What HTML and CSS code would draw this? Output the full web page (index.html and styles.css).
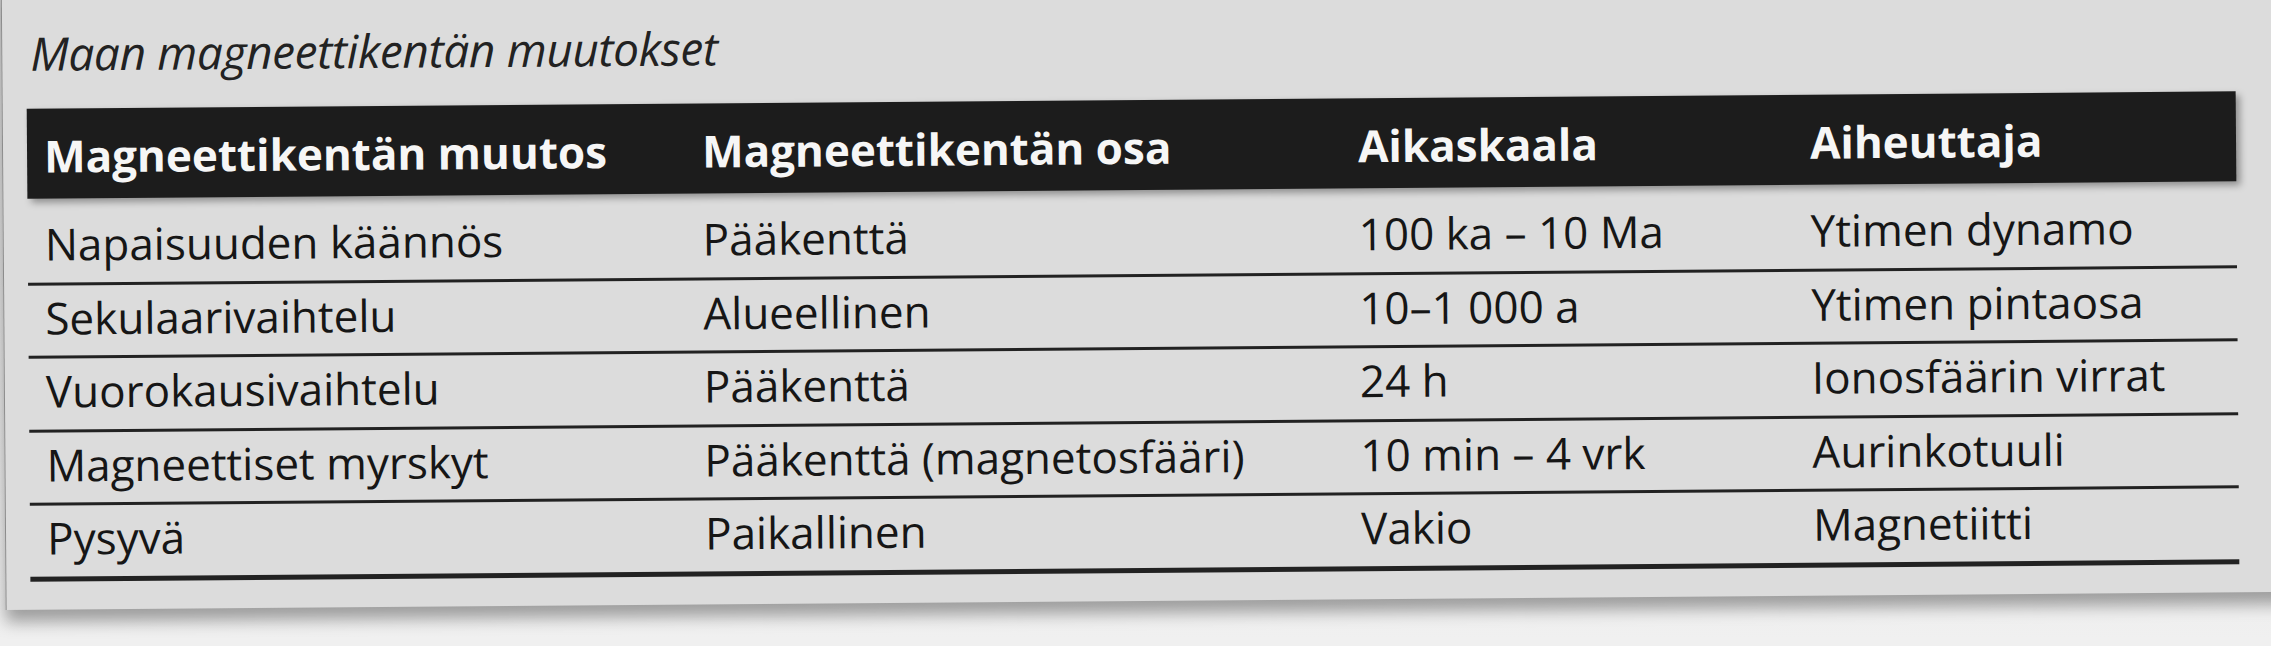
FILE: index.html
```html
<!DOCTYPE html>
<html lang="fi">
<head>
<meta charset="utf-8">
<title>Maan magneettikentän muutokset</title>
<link rel="stylesheet" href="styles.css">
</head>
<body>
<div class="scan">
  <div class="paper">
    <h1 class="title">Maan magneettikentän muutokset</h1>
    <div class="table">
      <div class="thead">
        <div class="th">Magneettikentän muutos</div>
        <div class="th">Magneettikentän osa</div>
        <div class="th">Aikaskaala</div>
        <div class="th">Aiheuttaja</div>
      </div>
      <div class="tbody">
        <div class="row">
          <div class="td">Napaisuuden käännös</div>
          <div class="td">Pääkenttä</div>
          <div class="td">100 ka – 10 Ma</div>
          <div class="td">Ytimen dynamo</div>
        </div>
        <div class="row">
          <div class="td">Sekulaarivaihtelu</div>
          <div class="td">Alueellinen</div>
          <div class="td">10–1 000 a</div>
          <div class="td">Ytimen pintaosa</div>
        </div>
        <div class="row">
          <div class="td">Vuorokausivaihtelu</div>
          <div class="td">Pääkenttä</div>
          <div class="td">24 h</div>
          <div class="td">Ionosfäärin virrat</div>
        </div>
        <div class="row">
          <div class="td">Magneettiset myrskyt</div>
          <div class="td">Pääkenttä (magnetosfääri)</div>
          <div class="td">10 min – 4 vrk</div>
          <div class="td">Aurinkotuuli</div>
        </div>
        <div class="row row-last">
          <div class="td">Pysyvä</div>
          <div class="td">Paikallinen</div>
          <div class="td">Vakio</div>
          <div class="td">Magnetiitti</div>
        </div>
      </div>
    </div>
  </div>
</div>
</body>
</html>
```
FILE: styles.css
```css
html, body {
  margin: 0;
  padding: 0;
}

body {
  background: #eeeeee;
  font-family: "Open Sans", "Noto Sans", "Liberation Sans", sans-serif;
}

.scan {
  width: 2271px;
  height: 646px;
  overflow: hidden;
  background: linear-gradient(#d8d8d8, #f0f0f0 640px);
}

.paper {
  box-sizing: border-box;
  width: 2300px;
  height: 631px;
  margin-top: -30px;
  margin-left: 3px;
  padding-top: 51px;
  background: #dcdcdc;
  border-left: 1px solid #8c8c8c;
  box-shadow: 0 12px 16px rgba(0, 0, 0, 0.34);
  transform: rotate(-0.45deg);
  transform-origin: 1135px 300px;
}

.title {
  margin: 0 0 0 28px;
  font-size: 46px;
  line-height: 46px;
  font-style: italic;
  font-weight: 400;
  color: #222222;
  letter-spacing: -0.4px;
}

.table {
  width: 2209px;
  margin: 33px 0 0 24px;
}

.thead,
.row {
  display: grid;
  grid-template-columns: 658px 656px 452px 443px;
}

.thead {
  height: 90px;
  background: #1c1c1c;
  box-shadow: 4px 4px 7px rgba(0, 0, 0, 0.35);
}

.th {
  padding: 4px 0 0 17px;
  line-height: 86px;
  font-size: 44px;
  font-weight: 700;
  color: #f6f6f6;
  white-space: nowrap;
}

.tbody {
  margin-top: 13px;
}

.row {
  border-bottom: 3px solid #222222;
}

.row-last {
  border-bottom-width: 5px;
}

.td {
  padding: 7px 0 13.5px 17px;
  line-height: 50px;
  font-size: 44px;
  color: #161616;
  white-space: nowrap;
}
```
